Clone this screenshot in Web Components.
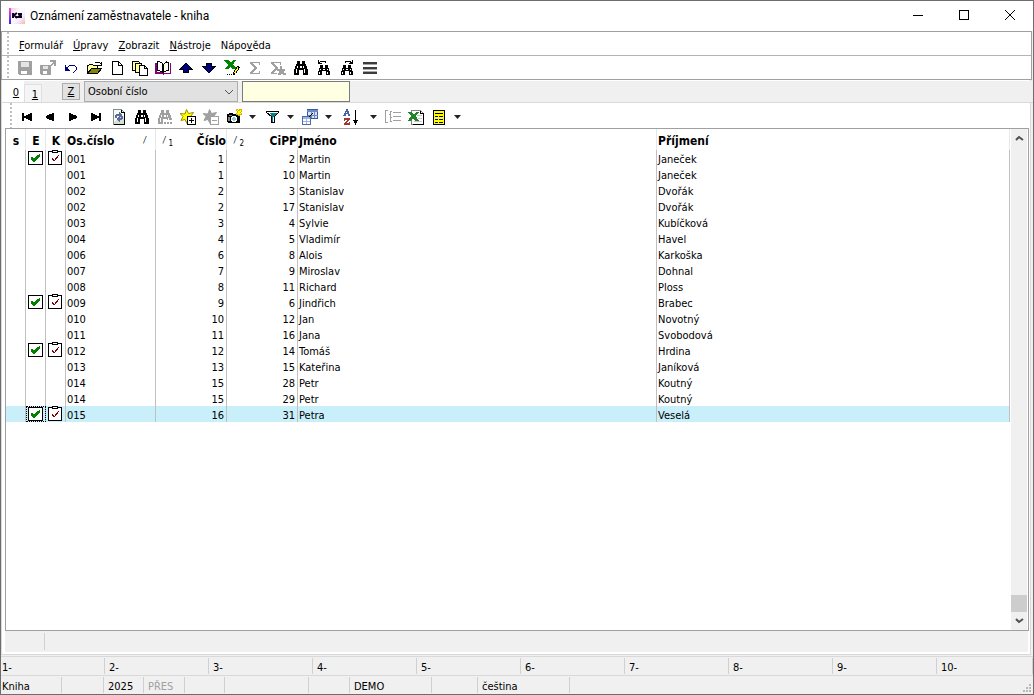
<!DOCTYPE html>
<html lang="cs">

<head>
  <meta charset="UTF-8">
  <meta name="viewport" content="width=device-width, initial-scale=1.0">
  <title>Oznámení zaměstnavatele - kniha</title>
  <style>
    html,
    body {
      height: 100%;
      margin: 0;
    }

    body {
      font: 11px/16px "DejaVu Sans Condensed", "DejaVu Sans", sans-serif;
      color: #000;
      background: #f0f0f0;
    }
  </style>
</head>

<body>
  <k2-window caption="Oznámení zaměstnavatele - kniha">
    <k2-menu-bar slot="bars"></k2-menu-bar>
    <k2-toolbar slot="bars" icons="save saveAs undo open page pages book up down excelPen sum sumStar find findPrev findNext menu"></k2-toolbar>
    <k2-book-bar></k2-book-bar>
    <k2-toolbar class="nav" icons="first prev next last refresh find findOff star starOff camera > filter > layout > sort > list excel form >"></k2-toolbar>
    <k2-grid></k2-grid>
    <k2-status-bar slot="status"></k2-status-bar>
  </k2-window>

  <script>
    const binoculars = c => `<path fill="${c}" d="M4 1h3v3h2V1h3v3h1v2h1v3h1v6h-5v-5H6v5H1V9h1V6h1V4h1z"/><path fill="#fff" d="M4 6h1v2H4zM3 9h1v4H3zM10 6h1v2h-1zM11 9h1v4h-1zM7 6h2v2H7z"/>`;
    const smallBinoculars = `<path d="M4 5h3v3h2V5h3v3h1v3h1v4h-4v-4H6v4H2v-4h1V8h1z"/><path fill="#fff" d="M4 9h1v1H4zM3 12h1v2H3zM11 9h1v1h-1zM11 12h1v2h-1zM7 9h2v1H7z"/>`;
    const star = (fill, line) => `<path shape-rendering="auto" fill="${fill}" stroke="${line}" d="M6.500.500l2 4 5-1-2.500 3.500 2 3.500-4-1-2 5-2-4-4 1 2-4-3-3 5 .500z"/>`;
    const tri = `<path fill="#00007b" stroke="#000" d="M8 3L1.500 9.500H5.500V12.500H10.500V9.500H14.500z"/>`;

    // 16x16 glyphs of the toolbars and of the grid cells
    const ICONS = {
      save: `<path fill="#a0a0a0" d="M1 1h14v14H2l-1-1z"/><path fill="#e4e4e4" d="M4 2h8v5H4z"/><path fill="#fff" d="M4 11h6v3H4z"/>`,
      saveAs: `<path fill="#a0a0a0" d="M0 5h10v1h1v9H1l-1-1zM10 0h6v6h-2V4h-1v1h-1v1h-2V5h1V4h1V3h1V2h-3z"/><path fill="#e4e4e4" d="M3 6h5v3H3z"/><path fill="#fff" d="M3 11h4v3H3z"/>`,
      undo: `<path fill="#00007b" d="M2 5h1v2h1v1h1v1h1v1h1v1H2z"/><path fill="none" stroke="#00007b" d="M4 8L7 5h4l2 2v3l-2 2h-1"/>`,
      open: `<path fill="#ffff9c" stroke="#000" d="M1.500 13.500v-8h1l1-1h3l1 1h4v3"/><path fill="#848400" stroke="#000" d="M1.500 13.500l4-5h10l-4 5z"/><path fill="none" stroke="#000" d="M9 3l1-1h3l2 2M15.500 2v3H12"/>`,
      page: `<path fill="#fff" stroke="#000" d="M3.500 1.500h6l4 4v9h-10z"/><path fill="none" stroke="#000" d="M9.500 1.500v4h4"/>`,
      pages: `<path fill="#ffff9c" stroke="#000" d="M.500 1.500h6l2 2v7h-8z"/><path fill="#ffff9c" stroke="#000" d="M3.500 3.500h6v9h-6z"/><path fill="#fff" stroke="#000" d="M7.500 5.500h5l3 3v7h-8z"/><path fill="none" stroke="#000" d="M12.500 5.500v3h3"/>`,
      book: `<path fill="#84007b" d="M0 3h2v9h5l1 1h7V3h1v11H9l-1 1-1-1H0z"/><path fill="#fff" stroke="#000" d="M2.500 1.500h2l3 2v9l-3-2h-2z"/><path fill="#ffffce" stroke="#000" d="M8.500 4.500l3-3v9l-3 2z"/><path fill="#fff" stroke="#000" d="M11.500 2.500h2v8h-2l-3 2"/>`,
      up: tri,
      down: `<g transform="rotate(180 8 8)">${tri}</g>`,
      excelPen: `<path fill="#008400" d="M0 0h5l2 3 2-3h3L9 5l4 4H8L6 7 4 9H0l4-4z"/><path fill="#ffff00" stroke="#000" d="M9.500 12.500l4-6 2 1-4 6-2 1z"/><path d="M3 14h1v1H3zM5 14h1v1H5zM7 14h1v1H7z"/>`,
      sum: `<path fill="#a0a0a0" d="M3 2h10v3h-1V3H6l4 5-4 5h6v-2h1v3H3v-1l4-5-4-5z"/>`,
      sumStar: `<path fill="#a0a0a0" d="M1 2h10v3h-1V3H4l4 5-4 5h3v1H1v-1l4-5-4-5z"/><path fill="#a0a0a0" d="M10 6h2v3h3v2h-1v2h2v2h-3v-1h-2v1H8v-2h1v-2H7V9h3z"/>`,
      find: binoculars('#000'),
      findOff: `${binoculars('#a0a0a0')}<path fill="#fff" d="M6 11h10v5H6z"/><path fill="#a0a0a0" d="M7 13h2v2H7zM10 13h2v2h-2zM13 13h2v2h-2z"/>`,
      findPrev: `${smallBinoculars}<path fill="none" stroke="#000" d="M2.500 0v3.500H6M3 3l2-1.500h4l1 1"/>`,
      findNext: `${smallBinoculars}<path fill="none" stroke="#000" d="M13.500 0v3.500H10M13 3l-2-1.500H7l-1 1"/>`,
      menu: `<path fill="#3c3c3c" d="M1 2h14v2H1zM1 7h14v2H1zM1 12h14v2H1z"/><path fill="#a8a8a8" d="M1 4h14v1H1zM1 9h14v1H1zM1 11h14v1H1z"/>`,
      first: `<path d="M3 4h2v8H3zM13 4v8h-1L6 9H5V7h1l6-3z"/>`,
      prev: `<path d="M12 4v8h-1L4 9V7l7-3z"/>`,
      next: `<path d="M4 4v8h1l7-3V7L5 4z"/>`,
      last: `<path d="M11 4h2v8h-2zM3 4v8h1l6-3h1V7h-1L4 4z"/>`,
      refresh: `<path fill="#f4faf4" stroke="#848c84" d="M2.500.500h8l3 3v12h-11z"/><path fill="#d5e0d5" d="M8 8h5v7H3v-2z"/><path fill="none" stroke="#000" d="M10.500.500v3h3v12h-11"/><path fill="#5a6b9c" d="M4 6h1V5h3V3h1l2 3-2 3H8V7H6v2H4zM12 7v3h-1v1H9v2H8l-3-3 3-2h1v1h1V7z"/>`,
      star: `${star('#ffff00', '#a08c00')}<path fill="#fff" stroke="#000" d="M7.500 7.500h8v8h-8z"/><path d="M9 11h5v1H9zM11 9h1v5h-1z"/>`,
      starOff: `${star('#a0a0a0', '#a0a0a0')}<path fill="#fff" stroke="#a0a0a0" d="M7.500 7.500h8v8h-8z"/><path fill="#a0a0a0" d="M9 11h5v1H9z"/>`,
      camera: `<path d="M1 5h2V4h4v1h7v9H2v-1H1z"/><path fill="#848484" d="M3 6h3v1H3zM2 8h2v4H2z"/><path fill="#fff" d="M6 7h4v1h1v4h-1v1H6v-1H5V8h1z"/><path fill="#84ced6" d="M7 8h2v1h1v2H9v1H7v-1H6V9h1z"/><path fill="#d6b500" d="M10 0h2v1h1V0h3v3h-1v1h1v2h-2v1h-2V6h-2V4h1V2h-1z"/><path fill="#ffff00" d="M11 1h1v1h2V1h1v2h-1v1h1v1h-2v1h-1V5h-1V4h1V2h-1z"/>`,
      filter: `<path fill="#fff" stroke="#000" d="M2.500 2.500h12v1l-4 4v6h-3v-6l-5-4z"/><path fill="#008484" d="M6 4h7L9 8v5H8V8z"/>`,
      layout: `<path fill="#d6e3f7" stroke="#3a5a9c" d="M5.500.500h10v9h-10z"/><path fill="#6b8ac6" d="M5 1h11v2H5z"/><path fill="none" stroke="#6b8ac6" d="M9.500 3v6M12.500 3v6M6 6.500h10"/><path fill="#fff" stroke="#4a6bad" d="M.500 7.500h8v8h-8z"/><path fill="#9cb5de" d="M1 8h7v2H1zM1 12h7v1H1zM4 10h1v5H4z"/><path stroke="#000" d="M7 8l4-4"/>`,
      sort: `<path fill="#4263a5" d="M3 0h2v2h1v3h1v2H5V5H3v2H0V6h1V4h1V2h1z"/><path fill="#fff" d="M3 3h1v1H3z"/><path fill="#9c3931" d="M1 9h6v2H6v1H5v1H4v1h2v-1h1v3H1v-2h1v-1h1v-1h1v-1H2v1H1z"/><path d="M12 1h1v10h2v1h-1v2h-1v2h-1v-2h-1v-2h-1v-1h2z"/>`,
      list: `<path fill="none" stroke="#a0a0a0" d="M3 1.500H.500v12H3M7 2.500H5.500v3H4h1.500v3H7M5.500 7v5.500H7"/><path fill="#a0a0a0" d="M8 3h8v1H8zM8 7h8v1H8zM8 11h8v1H8z"/>`,
      excel: `<path fill="#fff" stroke="#848484" d="M3.500 1.500h9l3 3v11h-12z"/><path fill="none" stroke="#000" d="M15.500 4.500v11h-11M12.500 1.500v3h3"/><path fill="#c6c6c6" d="M9 6h5v1H9zM10 9h4v1h-4zM6 12h8v1H6z"/><path fill="#218429" d="M0 3h4l2 3 2-3h3L8 7l3 5H7L5 9l-2 3H0l3-5z"/>`,
      form: `<path d="M2 1h12v15H2z"/><path fill="#ffff00" d="M3 2h10v13H3z"/><path d="M4 4h8v1H4z"/><path fill="#000084" d="M4 7h3v1H4zM8 7h4v1H8zM4 10h3v1H4zM8 10h4v1H8zM4 13h3v1H4zM8 13h4v1H8z"/>`,
      checked: `<path fill="#fff" stroke="#000" d="M1.500 1.500h14v13h-14z"/><path fill="#008000" d="M12 4h1v3h-1v1h-1v1h-1v1H9v1H8v1H6v-1H5v-1H4V7h2v1h2V7h1V6h1V5h2z"/>`,
      clipboard: `<path fill="#fff" stroke="#000" d="M1.500 1.500h13v13h-13z"/><path fill="#fff" stroke="#000" d="M5.500.500h5v2h-5z"/><path fill="none" stroke="#800000" d="M5 8l2 3 5-6"/>`,
      chevron: `<path fill="none" stroke="#555" d="M4 6l4 4 4-4"/>`
    };

    function icon(name) {
      return `<svg width="16" height="16" viewBox="0 0 16 16" shape-rendering="crispEdges" aria-hidden="true">${ICONS[name]}</svg>`;
    }

    class K2Window extends HTMLElement {
      connectedCallback() {
        this.attachShadow({ mode: 'open' }).innerHTML = `
          <style>
            :host { display: flex; flex-direction: column; box-sizing: border-box; min-height: 100%; border: 1px solid #6d6d6d; }
            header { display: flex; align-items: center; height: 30px; background: #fff; }
            header svg { flex: none; }
            .logo { margin: 0 5px 0 8px; }
            h1 { flex: 1; margin: 0; font: 12px/16px Roboto, "Open Sans", sans-serif; }
            button { width: 46px; height: 30px; padding: 0; border: 0; background: none; }
            .bars { border: 1px solid #a0a0a0; background: #fff; margin-right: 1px; }
            main { flex: 1; display: flex; flex-direction: column; margin-right: 2px; padding: 0 1px 2px 3px; background: #fff; border: solid #d9d9d9; border-width: 0 1px 1px 1px; }
          </style>
          <header>
            <svg class="logo" width="16" height="16" viewBox="0 0 16 16">
              <defs>
                <linearGradient id="g" x2="1" y2="1"><stop stop-color="#f4b8ec"/><stop offset=".4" stop-color="#fff"/><stop offset=".7" stop-color="#f4ecff"/><stop offset="1" stop-color="#f4b8a8"/></linearGradient>
                <linearGradient id="l" x2="0" y2="1"><stop stop-color="#ff50c0"/><stop offset="1" stop-color="#3020ff"/></linearGradient>
              </defs>
              <rect width="16" height="16" fill="url(#g)"/><rect width="2" height="16" fill="url(#l)"/>
              <path stroke="#102" stroke-width="2" fill="none" d="M4 5v5M8 5L5 7l3 3M9 6h3v1l-3 2h4"/>
            </svg>
            <h1></h1>
            <button aria-label="Minimalizovat"><svg width="12" height="12" shape-rendering="crispEdges"><path d="M1 6h10v1H1z"/></svg></button>
            <button aria-label="Maximalizovat"><svg width="12" height="12" shape-rendering="crispEdges"><path fill="none" stroke="#000" d="M1.500 1.500h9v9h-9z"/></svg></button>
            <button aria-label="Zavřít"><svg width="12" height="12"><path fill="none" stroke="#000" d="M1 1l10 10M11 1L1 11"/></svg></button>
          </header>
          <div class="bars"><slot name="bars"></slot></div>
          <main><slot></slot></main>
          <slot name="status"></slot>
        `;
        this.shadowRoot.querySelector('h1').textContent = this.getAttribute('caption');
      }
    }
    customElements.define('k2-window', K2Window);

    const GRIP = `
      .grip { flex: none; width: 2px; margin-left: 5px; align-self: stretch; background: repeating-linear-gradient(#c0c0c0 0 2px, #fff 2px 4px); }
    `;

    class K2MenuBar extends HTMLElement {
      connectedCallback() {
        this.attachShadow({ mode: 'open' }).innerHTML = `
          <style>
            ${GRIP}
            :host { display: flex; align-items: center; height: 23px; border-bottom: 1px solid #b4b4b4; }
            nav { display: flex; gap: 10px; padding: 4px 0 0 10px; }
            a { color: inherit; text-decoration: none; }
          </style>
          <span class="grip"></span>
          <nav>
            <a href="#"><u>F</u>ormulář</a>
            <a href="#"><u>Ú</u>pravy</a>
            <a href="#"><u>Z</u>obrazit</a>
            <a href="#"><u>N</u>ástroje</a>
            <a href="#">Nápo<u>v</u>ěda</a>
          </nav>
        `;
      }
    }
    customElements.define('k2-menu-bar', K2MenuBar);

    class K2Toolbar extends HTMLElement {
      connectedCallback() {
        const buttons = this.getAttribute('icons').split(' ').map(name => name === '>'
          ? `<button class="drop" aria-label="Více"><svg width="7" height="4"><path fill="#222" d="M0 0h7L3.500 4z"/></svg></button>`
          : `<button class="${name}" aria-label="${name}">${icon(name)}</button>`);
        this.attachShadow({ mode: 'open' }).innerHTML = `
          <style>
            ${GRIP}
            :host { display: flex; align-items: center; height: 23px; }
            :host(.nav) { height: 25px; }
            .items { display: flex; padding-left: 4px; }
            :host(.nav) .items { padding: 3px 0 0 3px; }
            button { display: flex; align-items: center; justify-content: center; width: 23px; height: 22px; padding: 0; border: 0; background: none; }
            .drop { width: 15px; }
            .sort { width: 30px; }
          </style>
          <span class="grip"></span>
          <div class="items">${buttons.join('')}</div>
        `;
      }
    }
    customElements.define('k2-toolbar', K2Toolbar);

    class K2BookBar extends HTMLElement {
      connectedCallback() {
        this.attachShadow({ mode: 'open' }).innerHTML = `
          <style>
            :host { display: flex; height: 21px; margin: 1px -4px 0 -3px; background: #f0f0f0; border-bottom: 1px solid #d9d9d9; }
            button { padding: 0; border: 0; font: inherit; background: #fff; }
            .tab { width: 22px; padding: 2px 0 0 6px; }
            .tab + .tab { width: 18px; margin-top: 3px; border: 1px solid #e0e0e0; border-bottom: 0; background: #f5f5f5; padding: 2px 0 0 4px; }
            .order { width: 18px; height: 17px; margin: 2px 4px 0 20px; border: 1px solid #adadad; background: #e1e1e1; }
            .combo { display: grid; width: 154px; margin-right: 4px; }
            select, svg { grid-area: 1 / 1; }
            select { appearance: none; padding: 1px 3px 0; border: 1px solid #adadad; border-radius: 0; font: inherit; color: #000; background: #e1e1e1; }
            svg { place-self: center end; margin-right: 1px; pointer-events: none; }
            input { box-sizing: border-box; width: 108px; padding: 0 3px; border: 1px solid #7a7a7a; font: inherit; background: #ffffe1; }
          </style>
          <button class="tab"><u>0</u></button>
          <button class="tab"><u>1</u></button>
          <button class="order"><u>Z</u></button>
          <label class="combo">
            <select aria-label="Třídění"><option>Osobní číslo</option></select>
            ${icon('chevron')}
          </label>
          <input type="text" aria-label="Hledat">
        `;
      }
    }
    customElements.define('k2-book-bar', K2BookBar);

    // marked, personal number, number, CiPP, first name, surname
    const ROWS = [
      [1, '001', 1, 2, 'Martin', 'Janeček'],
      [0, '001', 1, 10, 'Martin', 'Janeček'],
      [0, '002', 2, 3, 'Stanislav', 'Dvořák'],
      [0, '002', 2, 17, 'Stanislav', 'Dvořák'],
      [0, '003', 3, 4, 'Sylvie', 'Kubíčková'],
      [0, '004', 4, 5, 'Vladimír', 'Havel'],
      [0, '006', 6, 8, 'Alois', 'Karkoška'],
      [0, '007', 7, 9, 'Miroslav', 'Dohnal'],
      [0, '008', 8, 11, 'Richard', 'Ploss'],
      [1, '009', 9, 6, 'Jindřich', 'Brabec'],
      [0, '010', 10, 12, 'Jan', 'Novotný'],
      [0, '011', 11, 16, 'Jana', 'Svobodová'],
      [1, '012', 12, 14, 'Tomáš', 'Hrdina'],
      [0, '013', 13, 15, 'Kateřina', 'Janíková'],
      [0, '014', 15, 28, 'Petr', 'Koutný'],
      [0, '014', 15, 29, 'Petr', 'Koutný'],
      [1, '015', 16, 31, 'Petra', 'Veselá']
    ];

    class K2Grid extends HTMLElement {
      connectedCallback() {
        const rows = ROWS.map(([marked, code, number, cipp, name, surname], i) => `
          <tr${i === ROWS.length - 1 ? ' class="selected"' : ''}>
            <td></td>
            <td class="mark">${marked ? icon('checked') : ''}</td>
            <td class="mark">${marked ? icon('clipboard') : ''}</td>
            <td>${code}</td>
            <td class="num">${number}</td>
            <td class="num">${cipp}</td>
            <td>${name}</td>
            <td>${surname}</td>
          </tr>`).join('');
        this.attachShadow({ mode: 'open' }).innerHTML = `
          <style>
            :host { flex: 1; display: flex; flex-direction: column; }
            .view { flex: 1; display: flex; border: 1px solid #a0a0a0; padding-right: 1px; }
            .rows { flex: 1; }
            table { width: 100%; table-layout: fixed; border-collapse: separate; border-spacing: 0; }
            th, td { box-sizing: border-box; border-right: 1px solid #c0c0c0; text-align: left; white-space: nowrap; overflow: hidden; }
            th { height: 21px; padding: 3px 0 0 1px; border-color: #e6e6e6; font-size: 12px; line-height: 18px; }
            th.mid { text-align: center; }
            td { height: 16px; padding: 4px 2px 0 1px; line-height: 12px; }
            .num { text-align: right; }
            .head { display: flex; justify-content: space-between; }
            .order { padding: 0 9px 0 6px; font-size: 8px; font-style: italic; font-weight: normal; }
            .order sub { margin-left: 3px; font-size: 8px; font-style: normal; line-height: 8px; }
            td.mark { padding: 0 0 0 1px; }
            .mark svg { display: block; }
            .selected { background: #c9effb; }
            .selected td:nth-child(2) { outline: 1px dotted #000; outline-offset: -1px; }
            .scroll { display: flex; flex-direction: column; width: 16px; margin-left: 1px; background: #f0f0f0; }
            .scroll button { display: grid; place-items: center; width: 16px; height: 18px; padding: 0; border: 0; background: none; }
            .thumb { height: 17px; margin-top: auto; background: #cdcdcd; }
            .foot { display: flex; height: 21px; margin-right: 1px; background: #f0f0f0; }
            .foot span { width: 39px; margin: 2px 0; border-right: 1px solid #d0d0d0; }
          </style>
          <div class="view">
            <div class="rows">
              <table>
                <colgroup>
                  <col style="width: 20px"><col style="width: 20px"><col style="width: 20px"><col style="width: 90px">
                  <col style="width: 71px"><col style="width: 71px"><col style="width: 359px"><col>
                </colgroup>
                <thead>
                  <tr>
                    <th class="mid">s</th>
                    <th class="mid">E</th>
                    <th class="mid">K</th>
                    <th><div class="head">Os.číslo<span class="order">/</span></div></th>
                    <th><div class="head"><span class="order">/<sub>1</sub></span>Číslo</div></th>
                    <th><div class="head"><span class="order">/<sub>2</sub></span>CiPP</div></th>
                    <th>Jméno</th>
                    <th>Příjmení</th>
                  </tr>
                </thead>
                <tbody>${rows}</tbody>
              </table>
            </div>
            <div class="scroll">
              <button aria-label="Nahoru"><svg width="9" height="6"><path fill="none" stroke="#505050" stroke-width="2" d="M1 5l3-3 4 3"/></svg></button>
              <div class="thumb"></div>
              <button aria-label="Dolů"><svg width="9" height="6"><path fill="none" stroke="#505050" stroke-width="2" d="M1 1l3 3 4-3"/></svg></button>
            </div>
          </div>
          <div class="foot"><span></span></div>
        `;
      }
    }
    customElements.define('k2-grid', K2Grid);

    class K2StatusBar extends HTMLElement {
      connectedCallback() {
        const keys = [1, 2, 3, 4, 5, 6, 7, 8, 9, 10].map(n => `<span>${n}-</span>`).join('');
        this.attachShadow({ mode: 'open' }).innerHTML = `
          <style>
            :host { display: block; margin-top: 1px; }
            div { display: grid; height: 18px; border-top: 1px solid #d9d9d9; }
            span { margin: 1px 0; padding-left: 4px; border-right: 1px solid #d0d0d0; line-height: 20px; white-space: nowrap; }
            span:first-child { padding-left: 1px; }
            .keys { grid-template-columns: repeat(9, 104fr) 96fr; }
            .info { grid-template-columns: 61px 42px 40px 41px 40px 84px 41px 82px 46px 92px 1fr; }
            .keys, .info { grid-template-rows: 18px; }
            .off { color: #a0a0a0; }
            .grip { display: grid; place-items: end; padding: 0 2px 1px 0; border: 0; }
          </style>
          <div class="keys">${keys}</div>
          <div class="info">
            <span>Kniha</span><span></span><span>2025</span><span class="off">PŘES</span><span></span><span></span>
            <span></span><span>DEMO</span><span></span><span>čeština</span>
            <span class="grip"><svg width="8" height="8" fill="#b8b8b8"><path d="M6 0h2v2H6zM3 3h2v2H3zM6 3h2v2H6zM0 6h2v2H0zM3 6h2v2H3zM6 6h2v2H6z"/></svg></span>
          </div>
        `;
      }
    }
    customElements.define('k2-status-bar', K2StatusBar);
  </script>
</body>

</html>
